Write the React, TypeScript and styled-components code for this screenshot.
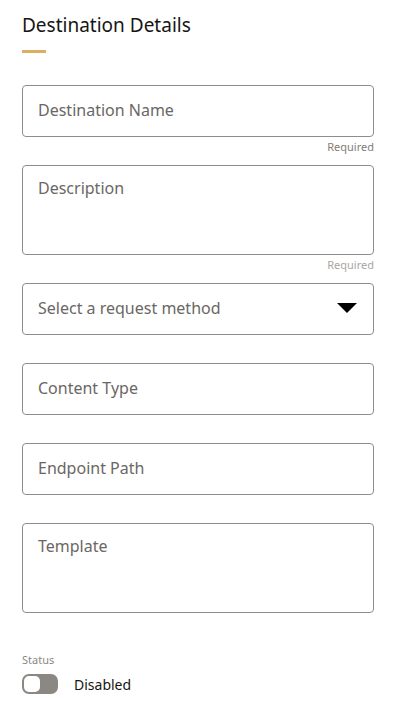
import React from 'react'
import styled, { createGlobalStyle } from 'styled-components'

const GlobalStyle = createGlobalStyle`
  body {
    margin: 0;
    background: #ffffff;
    font-family: "Noto Sans", "Open Sans", sans-serif;
  }
`

type FieldProps = {
  placeholder: string
  multiline?: boolean
  select?: boolean
  helper?: string
  helperTone?: 'dark' | 'light'
}

const Field = (props: FieldProps) => {
  const { placeholder, multiline, select, helper, helperTone } = props
  return (
    <FieldBlock>
      <Box $tall={!!multiline}>
        <Placeholder>{placeholder}</Placeholder>
        {select && <Caret />}
      </Box>
      <Foot>{helper && <Helper $tone={helperTone ?? 'dark'}>{helper}</Helper>}</Foot>
    </FieldBlock>
  )
}

export default function App() {
  return (
    <>
      <GlobalStyle />
      <Page>
        <Title>Destination Details</Title>
        <Accent />
        <Form>
          <Field placeholder="Destination Name" helper="Required" />
          <Field placeholder="Description" multiline helper="Required" helperTone="light" />
          <Field placeholder="Select a request method" select />
          <Field placeholder="Content Type" />
          <Field placeholder="Endpoint Path" />
          <Field placeholder="Template" multiline />
        </Form>
        <StatusLabel>Status</StatusLabel>
        <SwitchRow>
          <Switch>
            <Knob />
          </Switch>
          <SwitchText>Disabled</SwitchText>
        </SwitchRow>
      </Page>
    </>
  )
}

const Page = styled.div`
  width: 352px;
  padding: 12px 0 0 22px;
  display: flex;
  flex-direction: column;
`

const Title = styled.h1`
  margin: 0;
  font-size: 19px;
  line-height: 26px;
  font-weight: 400;
  color: #161513;
`

const Accent = styled.div`
  width: 24px;
  height: 3px;
  margin-top: 12px;
  background-color: #dcad62;
`

const Form = styled.div`
  margin-top: 32px;
  display: flex;
  flex-direction: column;
`

const FieldBlock = styled.div`
  display: flex;
  flex-direction: column;
`

const Box = styled.div<{ $tall: boolean }>`
  box-sizing: border-box;
  height: ${(p) => (p.$tall ? '90px' : '52px')};
  border: 1px solid #8f8d8a;
  border-radius: 4px;
  padding: 0 15px;
  padding-top: ${(p) => (p.$tall ? '11px' : '0')};
  padding-bottom: ${(p) => (p.$tall ? '0' : '2px')};
  display: flex;
  align-items: ${(p) => (p.$tall ? 'flex-start' : 'center')};
  justify-content: space-between;
`

const Placeholder = styled.span`
  font-size: 16px;
  line-height: 22px;
  color: #6a6764;
`

const Caret = styled.span`
  width: 0;
  height: 0;
  margin-right: 1px;
  border-left: 10px solid transparent;
  border-right: 10px solid transparent;
  border-top: 10px solid #000000;
`

const Foot = styled.div`
  height: 28px;
  display: flex;
  justify-content: flex-end;
  align-items: flex-start;
`

const Helper = styled.span<{ $tone: 'dark' | 'light' }>`
  font-size: 11px;
  line-height: 20px;
  color: ${(p) => (p.$tone === 'dark' ? '#847d77' : '#aca6a1')};
`

const StatusLabel = styled.div`
  margin-top: 11px;
  font-size: 11px;
  line-height: 16px;
  color: #8a8885;
`

const SwitchRow = styled.div`
  margin-top: 6px;
  display: flex;
  align-items: center;
  gap: 16px;
`

const Switch = styled.div`
  box-sizing: border-box;
  width: 36px;
  height: 20px;
  border-radius: 7px;
  background-color: #8b8782;
  padding: 2px;
  display: flex;
  align-items: center;
`

const Knob = styled.div`
  width: 16px;
  height: 16px;
  border-radius: 5px;
  background-color: #ffffff;
`

const SwitchText = styled.span`
  font-size: 14px;
  color: #161513;
`
